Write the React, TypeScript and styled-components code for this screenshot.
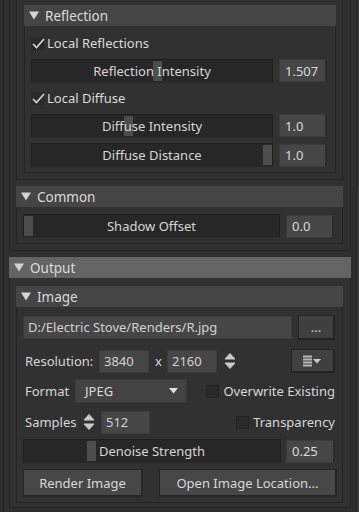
import React from "react";
import styled, { createGlobalStyle } from "styled-components";

const Global = createGlobalStyle`
  html, body { margin: 0; padding: 0; background: #2e2e2e; }
  body {
    width: 359px; height: 512px; overflow: hidden;
    font-family: "Noto Sans", "Open Sans", sans-serif;
    font-size: 13px; color: #d6d6d6;
  }
  * { box-sizing: border-box; }
`;

const Root = styled.div`
  width: 359px;
  height: 512px;
  overflow: hidden;
  background: #2e2e2e;
  display: flex;
  padding-left: 3px;
`;

const Frame = styled.div`
  width: 354px;
  flex: none;
  border-left: 1px solid #242424;
  border-right: 1px solid #242424;
  padding: 0 5px;
  display: flex;
  flex-direction: column;
`;

const ScrollTrack = styled.div`
  flex: 1;
  display: flex;
  flex-direction: column;
`;

const ScrollThumb = styled.div`
  margin-top: 185px;
  height: 327px;
  background: #393939;
`;

/* A group body continuing from above (its header scrolled off) */
const OpenBody = styled.div<{ $pl: number; $pr: number; $pt: number; $pb: number }>`
  border: 1px solid #242424;
  border-top: none;
  background: #303030;
  padding: ${(p) => `${p.$pt}px ${p.$pr}px ${p.$pb}px ${p.$pl}px`};
  display: flex;
  flex-direction: column;
`;

const Group = styled.div<{ $mt?: number }>`
  margin-top: ${(p) => p.$mt ?? 0}px;
  display: flex;
  flex-direction: column;
`;

const Header = styled.div<{ $bright?: boolean }>`
  height: 21px;
  background: ${(p) => (p.$bright ? "#646464" : "#454545")};
  display: flex;
  align-items: center;
  gap: 6px;
  padding-left: 5px;
  color: #dadada;
  font-size: 13.5px;
`;

const Body = styled.div<{ $pl: number; $pr: number; $pt: number; $pb: number }>`
  border: 1px solid #242424;
  border-top: none;
  background: #313131;
  padding: ${(p) => `${p.$pt}px ${p.$pr}px ${p.$pb}px ${p.$pl}px`};
  display: flex;
  flex-direction: column;
`;

const Stack = styled.div<{ $gap: number }>`
  display: flex;
  flex-direction: column;
  gap: ${(p) => p.$gap}px;
`;

const Row = styled.div<{ $h: number; $mt?: number; $gap?: number }>`
  height: ${(p) => p.$h}px;
  margin-top: ${(p) => p.$mt ?? 0}px;
  display: flex;
  align-items: center;
  gap: ${(p) => p.$gap ?? 0}px;
`;

const CheckRow = styled.div`
  height: 22px;
  display: flex;
  align-items: center;
  gap: 3px;
  color: #dadada;
`;

const CheckBox = styled.div<{ $checked?: boolean }>`
  width: 13px;
  height: 13px;
  flex: none;
  background: #2a2a2a;
  border: 1px solid ${(p) => (p.$checked ? "#2a2a2a" : "#222")};
  position: relative;
  svg { position: absolute; left: -1px; top: -2px; }
`;

const SliderBox = styled.div<{ $w: number }>`
  width: ${(p) => p.$w}px;
  height: 24px;
  flex: none;
  background: #272727;
  border: 1px solid #1f1f1f;
  border-bottom-color: #2a2a2a;
  position: relative;
  display: flex;
  align-items: center;
  justify-content: center;
  color: #d6d6d6;
`;

const Handle = styled.div`
  position: absolute;
  top: 1px;
  bottom: 1px;
  width: 9px;
  background: #4d4d4d;
`;

const SliderText = styled.span`
  position: relative;
`;

const ValueBox = styled.div<{ $w: number; $h?: number }>`
  width: ${(p) => p.$w}px;
  height: ${(p) => p.$h ?? 23}px;
  flex: none;
  background: #464646;
  border: 1px solid #3b3b3b;
  border-right: 2px solid #2c2c2c;
  display: flex;
  align-items: center;
  padding-left: 5px;
  color: #dcdcdc;
`;

const TextField = styled.div<{ $w?: number }>`
  ${(p) => (p.$w ? `width: ${p.$w}px; flex: none;` : "flex: 1;")}
  height: 23px;
  background: #464646;
  border: 1px solid #3b3b3b;
  display: flex;
  align-items: center;
  padding-left: 4px;
  color: #d2d2d2;
  white-space: nowrap;
  overflow: hidden;
`;

const Label = styled.span<{ $w?: number }>`
  color: #d6d6d6;
  padding-left: 2px;
  ${(p) => (p.$w ? `width: ${p.$w}px; flex: none;` : "")}
  white-space: nowrap;
`;

const Spacer = styled.div`
  flex: 1;
`;

const ToolButton = styled.div<{ $w: number; $h: number }>`
  width: ${(p) => p.$w}px;
  height: ${(p) => p.$h}px;
  flex: none;
  background: #404040;
  border: 1px solid #242424;
  border-width: 1px 2px 2px 1px;
  display: flex;
  align-items: center;
  justify-content: center;
  color: #d0d0d0;
`;

const Combo = styled.div<{ $w: number }>`
  width: ${(p) => p.$w}px;
  height: 24px;
  flex: none;
  background: #434343;
  border: 1px solid #393939;
  display: flex;
  align-items: center;
  justify-content: space-between;
  padding: 0 8px 0 9px;
  color: #dadada;
`;

const CheckLabel = styled.div`
  display: flex;
  align-items: center;
  gap: 4px;
  color: #d6d6d6;
  white-space: nowrap;
`;

const PushButton = styled.div<{ $w: number }>`
  width: ${(p) => p.$w}px;
  height: 28px;
  flex: none;
  background: #474747;
  border: 1px solid #252525;
  border-width: 1px 2px 2px 1px;
  display: flex;
  align-items: center;
  justify-content: center;
  color: #d8d8d8;
`;

const Icon = styled.svg`
  display: block;
  flex: none;
`;

const Tri = () => (
  <Icon width="10" height="9" viewBox="0 0 10 9">
    <polygon points="0,0.5 10,0.5 5,8.5" fill="#d4d4d4" />
  </Icon>
);

const Check = () => (
  <Icon width="15" height="15" viewBox="0 0 15 15">
    <polyline points="2,8 5.5,11.5 13,3" fill="none" stroke="#d4d4d4" strokeWidth="1.7" />
  </Icon>
);

const Spinner = () => (
  <Icon width="12" height="18" viewBox="0 0 12 18">
    <path d="M6 1.5 L11 7 L1 7 Z" fill="#c9c9c9" stroke="#c9c9c9" strokeWidth="1" strokeLinejoin="round" />
    <path d="M1 11 L11 11 L6 16.5 Z" fill="#c9c9c9" stroke="#c9c9c9" strokeWidth="1" strokeLinejoin="round" />
  </Icon>
);

const ListDrop = () => (
  <Icon width="19" height="12" viewBox="0 0 19 12">
    <rect x="0" y="0.5" width="9" height="2" fill="#b8b8b8" />
    <rect x="0" y="3.5" width="9" height="2" fill="#b8b8b8" />
    <rect x="0" y="6.5" width="9" height="2" fill="#b8b8b8" />
    <rect x="0" y="9.5" width="9" height="2" fill="#b8b8b8" />
    <polygon points="10,4 18,4 14,8.5" fill="#c8c8c8" />
  </Icon>
);

const SmallDown = () => (
  <Icon width="9" height="6" viewBox="0 0 9 6">
    <polygon points="0,0 9,0 4.5,5.5" fill="#e0e0e0" />
  </Icon>
);

type SliderProps = { label: string; w: number; frac: number };
const Slider = ({ label, w, frac }: SliderProps) => {
  const travel = w - 2 - 9;
  return (
    <SliderBox $w={w}>
      <Handle style={{ left: Math.round(frac * travel) }} />
      <SliderText>{label}</SliderText>
    </SliderBox>
  );
};

export default function App() {
  return (
    <>
      <Global />
      <Root>
        <Frame>
          {/* Lighting (level 1) continuing */}
          <OpenBody $pl={6} $pr={7} $pt={0} $pb={6}>
            {/* Screen space (level 2) continuing */}
            <OpenBody $pl={7} $pr={6} $pt={5} $pb={6}>
              <Group>
                <Header>
                  <Tri />
                  <span>Reflection</span>
                </Header>
                <Body $pl={6} $pr={7} $pt={6} $pb={5}>
                  <Stack $gap={5}>
                    <CheckRow>
                      <CheckBox $checked>
                        <Check />
                      </CheckBox>
                      <span>Local Reflections</span>
                    </CheckRow>
                    <Row $h={23} $gap={6}>
                      <Slider label="Reflection Intensity" w={242} frac={0.524} />
                      <ValueBox $w={48}>1.507</ValueBox>
                    </Row>
                    <CheckRow>
                      <CheckBox $checked>
                        <Check />
                      </CheckBox>
                      <span>Local Diffuse</span>
                    </CheckRow>
                    <Row $h={23} $gap={6}>
                      <Slider label="Diffuse Intensity" w={242} frac={0.4} />
                      <ValueBox $w={48}>1.0</ValueBox>
                    </Row>
                    <Row $h={24} $mt={1} $gap={6}>
                      <Slider label="Diffuse Distance" w={242} frac={1} />
                      <ValueBox $w={48}>1.0</ValueBox>
                    </Row>
                  </Stack>
                </Body>
              </Group>
            </OpenBody>

            <Group $mt={6}>
              <Header>
                <Tri />
                <span>Common</span>
              </Header>
              <Body $pl={6} $pr={8} $pt={7} $pb={5}>
                <Row $h={24} $gap={6}>
                  <Slider label="Shadow Offset" w={257} frac={0} />
                  <ValueBox $w={48}>0.0</ValueBox>
                </Row>
              </Body>
            </Group>
          </OpenBody>

          <Group $mt={6}>
            <Header $bright>
              <Tri />
              <span>Output</span>
            </Header>
            <Body $pl={6} $pr={7} $pt={8} $pb={4}>
              <Group>
                <Header>
                  <Tri />
                  <span>Image</span>
                </Header>
                <Body $pl={6} $pr={7} $pt={8} $pb={5}>
                  <Row $h={24} $gap={6}>
                    <TextField>D:/Electric Stove/Renders/R.jpg</TextField>
                    <ToolButton $w={37} $h={25}>...</ToolButton>
                  </Row>

                  <Row $h={24} $mt={10}>
                    <Label $w={76}>Resolution:</Label>
                    <TextField $w={50}>3840</TextField>
                    <Label $w={18} style={{ paddingLeft: 6 }}>x</Label>
                    <TextField $w={50}>2160</TextField>
                    <Spacer style={{ flex: "none", width: 7 }} />
                    <Spinner />
                    <Spacer />
                    <ToolButton $w={44} $h={24}>
                      <ListDrop />
                    </ToolButton>
                  </Row>

                  <Row $h={24} $mt={6}>
                    <Label $w={52}>Format</Label>
                    <Combo $w={112}>
                      <span>JPEG</span>
                      <SmallDown />
                    </Combo>
                    <Spacer />
                    <CheckLabel>
                      <CheckBox />
                      <span>Overwrite Existing</span>
                    </CheckLabel>
                  </Row>

                  <Row $h={24} $mt={7}>
                    <Label $w={60}>Samples</Label>
                    <Spinner />
                    <Spacer style={{ flex: "none", width: 6 }} />
                    <TextField $w={49}>512</TextField>
                    <Spacer />
                    <CheckLabel>
                      <CheckBox />
                      <span>Transparency</span>
                    </CheckLabel>
                  </Row>

                  <Row $h={24} $mt={5} $gap={5}>
                    <Slider label="Denoise Strength" w={258} frac={0.254} />
                    <ValueBox $w={49}>0.25</ValueBox>
                  </Row>

                  <Row $h={28} $mt={6} $gap={16}>
                    <PushButton $w={120}>Render Image</PushButton>
                    <PushButton $w={178}>Open Image Location...</PushButton>
                  </Row>
                </Body>
              </Group>
            </Body>
          </Group>
        </Frame>
        <ScrollTrack>
          <ScrollThumb />
        </ScrollTrack>
      </Root>
    </>
  );
}
